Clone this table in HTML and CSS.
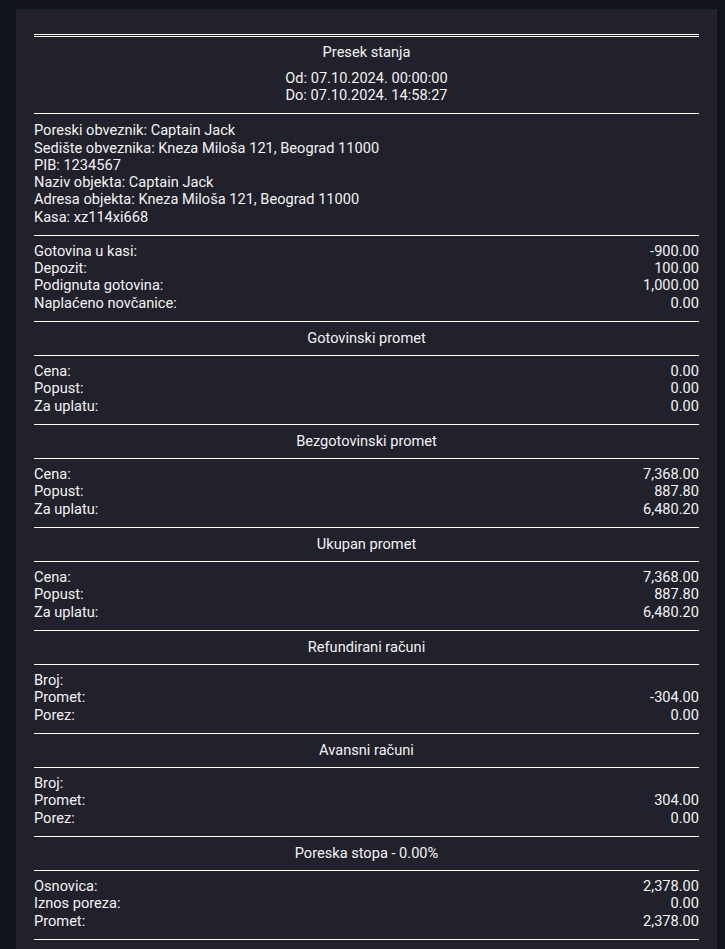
FILE: index.html
```html
<!DOCTYPE html>
<html lang="sr">
<head>
<meta charset="utf-8">
<title>Presek stanja</title>
<link rel="stylesheet" href="styles.css">
</head>
<body>
<div class="page">
  <div class="report">
    <div class="double"></div>
    <div class="head">
      <div class="head-title">Presek stanja</div>
      <div>Od: 07.10.2024. 00:00:00</div>
      <div>Do: 07.10.2024. 14:58:27</div>
    </div>
    <div class="sep"></div>
    <div class="block info">
      <div>Poreski obveznik: Captain Jack</div>
      <div>Sedište obveznika: Kneza Miloša 121, Beograd 11000</div>
      <div>PIB: 1234567</div>
      <div>Naziv objekta: Captain Jack</div>
      <div>Adresa objekta: Kneza Miloša 121, Beograd 11000</div>
      <div>Kasa: xz114xi668</div>
    </div>
    <div class="sep"></div>
    <div class="block">
      <div class="row"><span>Gotovina u kasi:</span><span>-900.00</span></div>
      <div class="row"><span>Depozit:</span><span>100.00</span></div>
      <div class="row"><span>Podignuta gotovina:</span><span>1,000.00</span></div>
      <div class="row"><span>Naplaćeno novčanice:</span><span>0.00</span></div>
    </div>
    <div class="sep"></div>
    <div class="title">Gotovinski promet</div>
    <div class="sep"></div>
    <div class="block">
      <div class="row"><span>Cena:</span><span>0.00</span></div>
      <div class="row"><span>Popust:</span><span>0.00</span></div>
      <div class="row"><span>Za uplatu:</span><span>0.00</span></div>
    </div>
    <div class="sep"></div>
    <div class="title">Bezgotovinski promet</div>
    <div class="sep"></div>
    <div class="block">
      <div class="row"><span>Cena:</span><span>7,368.00</span></div>
      <div class="row"><span>Popust:</span><span>887.80</span></div>
      <div class="row"><span>Za uplatu:</span><span>6,480.20</span></div>
    </div>
    <div class="sep"></div>
    <div class="title">Ukupan promet</div>
    <div class="sep"></div>
    <div class="block">
      <div class="row"><span>Cena:</span><span>7,368.00</span></div>
      <div class="row"><span>Popust:</span><span>887.80</span></div>
      <div class="row"><span>Za uplatu:</span><span>6,480.20</span></div>
    </div>
    <div class="sep"></div>
    <div class="title">Refundirani računi</div>
    <div class="sep"></div>
    <div class="block">
      <div class="row"><span>Broj:</span><span></span></div>
      <div class="row"><span>Promet:</span><span>-304.00</span></div>
      <div class="row"><span>Porez:</span><span>0.00</span></div>
    </div>
    <div class="sep"></div>
    <div class="title">Avansni računi</div>
    <div class="sep"></div>
    <div class="block">
      <div class="row"><span>Broj:</span><span></span></div>
      <div class="row"><span>Promet:</span><span>304.00</span></div>
      <div class="row"><span>Porez:</span><span>0.00</span></div>
    </div>
    <div class="sep"></div>
    <div class="title">Poreska stopa - 0.00%</div>
    <div class="sep"></div>
    <div class="block">
      <div class="row"><span>Osnovica:</span><span>2,378.00</span></div>
      <div class="row"><span>Iznos poreza:</span><span>0.00</span></div>
      <div class="row"><span>Promet:</span><span>2,378.00</span></div>
    </div>
    <div class="sep"></div>
  </div>
</div>
</body>
</html>
```

FILE: styles.css
```css
html, body {
  margin: 0;
  padding: 0;
  background: #11131b;
}
body {
  font-family: Roboto, "Liberation Sans", sans-serif;
  font-size: 14.6px;
  line-height: 17.25px;
  color: #f2f2f2;
}
.page {
  padding: 9px 8px 0 16px;
}
.report {
  background: #21212b;
  padding: 25px 18px 20px;
}
.double {
  height: 1px;
  border-top: 1px solid #ffffff;
  border-bottom: 1px solid #ffffff;
}
.sep {
  height: 1px;
  background: #ffffff;
}
.head {
  text-align: center;
  padding: 7px 0 9px;
}
.head-title {
  margin-bottom: 8.5px;
}
.block {
  padding: 7px 0 9px;
}
.info {
  padding: 8px 0 9px;
}
.row {
  display: flex;
  justify-content: space-between;
}
.title {
  text-align: center;
  padding: 8px 0;
}
```
